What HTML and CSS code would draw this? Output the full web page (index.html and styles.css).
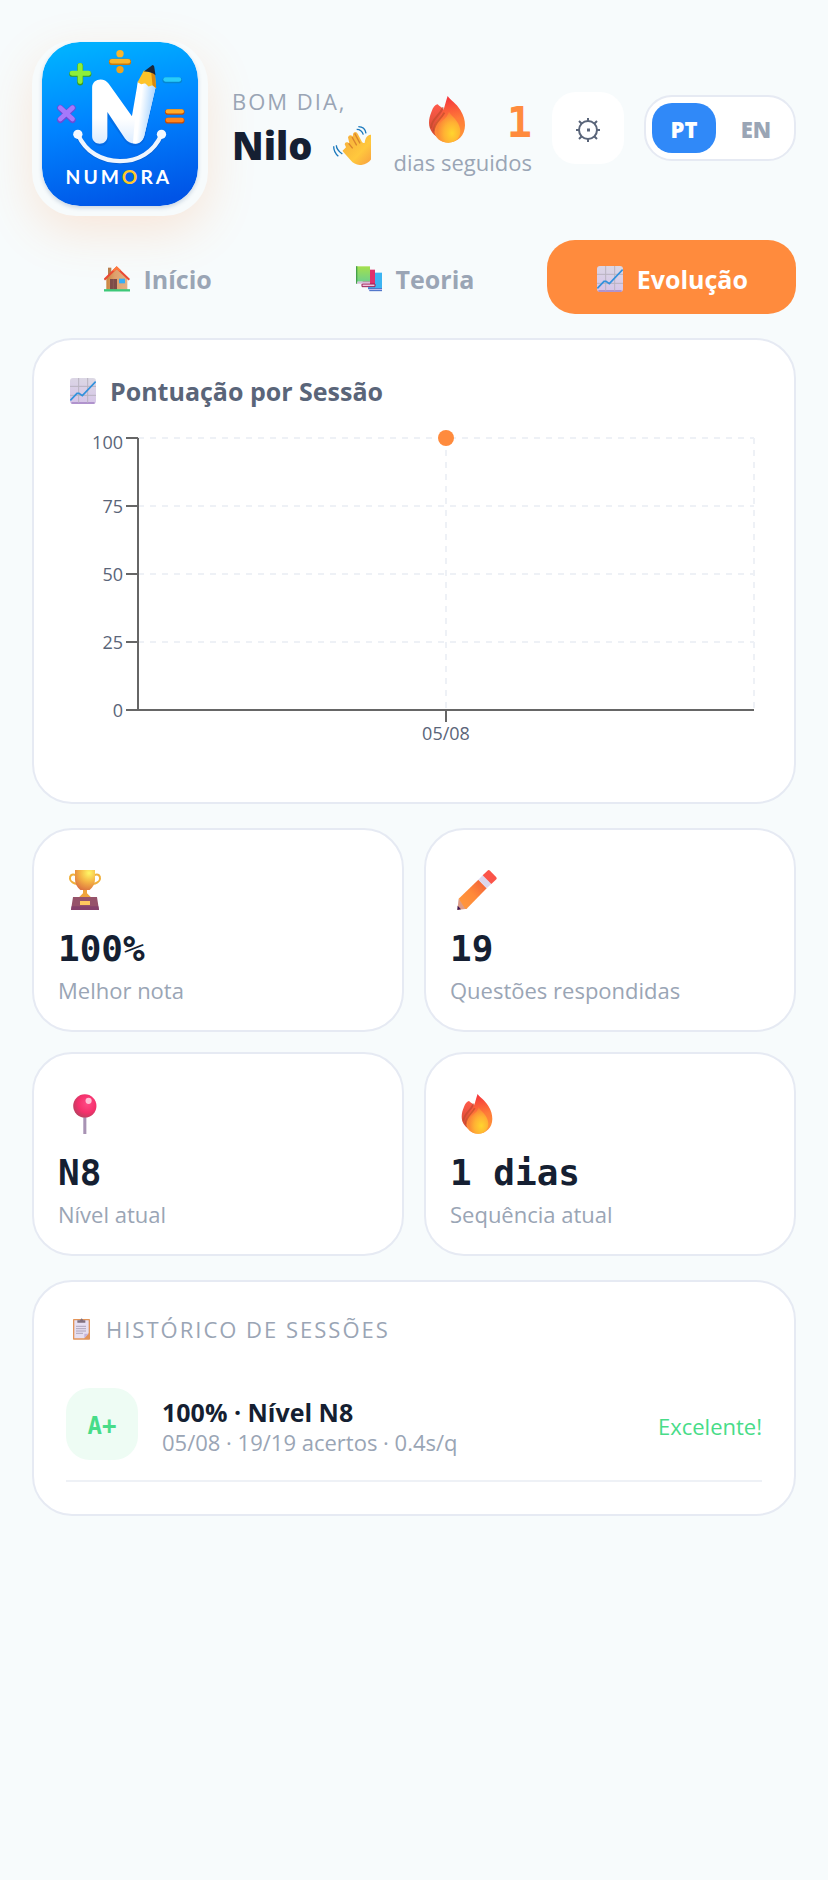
FILE: index.html
```html
<!DOCTYPE html>
<html lang="pt">
<head>
    <meta charset="UTF-8">
    <meta name="viewport" content="width=device-width, initial-scale=1.0">
    <title>Numora</title>
    <link rel="stylesheet" href="styles.css">
</head>
<body>
    <!-- shared icons -->
    <svg class="sprite" aria-hidden="true">
        <defs>
            <linearGradient id="flameOuter" x1="0.5" y1="0" x2="0.6" y2="1">
                <stop offset="0" stop-color="#f5323c"/>
                <stop offset="0.5" stop-color="#ff7a38"/>
                <stop offset="1" stop-color="#ff9b38"/>
            </linearGradient>
            <linearGradient id="flameBack" x1="0" y1="0" x2="0" y2="1">
                <stop offset="0" stop-color="#ff5a4a"/>
                <stop offset="1" stop-color="#cf4a30"/>
            </linearGradient>
            <radialGradient id="flameInner" cx="0.65" cy="0.7" r="0.7">
                <stop offset="0" stop-color="#ffd52e"/>
                <stop offset="0.5" stop-color="#ffb133"/>
                <stop offset="1" stop-color="#fa7a38"/>
            </radialGradient>
            <linearGradient id="paper" x1="1" y1="0" x2="0.8" y2="1">
                <stop offset="0" stop-color="#dcd9e4"/>
                <stop offset="1" stop-color="#d6c5e8"/>
            </linearGradient>
            <linearGradient id="wall" x1="0" y1="0" x2="1" y2="0">
                <stop offset="0" stop-color="#c9853f"/>
                <stop offset="0.4" stop-color="#dfa06c"/>
                <stop offset="1" stop-color="#e2b184"/>
            </linearGradient>
            <linearGradient id="bookGreen" x1="0" y1="0" x2="0" y2="1">
                <stop offset="0" stop-color="#a4e04c"/>
                <stop offset="1" stop-color="#6fd18a"/>
            </linearGradient>
            <radialGradient id="cup" cx="0.7" cy="0.15" r="0.9">
                <stop offset="0" stop-color="#fff766"/>
                <stop offset="0.5" stop-color="#f5b545"/>
                <stop offset="1" stop-color="#dd7440"/>
            </radialGradient>
            <linearGradient id="pencilBody" x1="0" y1="1" x2="1" y2="0">
                <stop offset="0" stop-color="#ff9a3d"/>
                <stop offset="0.5" stop-color="#ff8a3a"/>
                <stop offset="1" stop-color="#f05a38"/>
            </linearGradient>
            <radialGradient id="pinHead" cx="0.6" cy="0.4" r="0.65">
                <stop offset="0" stop-color="#ff4a85"/>
                <stop offset="0.6" stop-color="#f5306c"/>
                <stop offset="1" stop-color="#b8405f"/>
            </radialGradient>
            <linearGradient id="skin" x1="0" y1="0" x2="1" y2="1">
                <stop offset="0" stop-color="#f5a93a"/>
                <stop offset="0.6" stop-color="#ffc83d"/>
                <stop offset="1" stop-color="#f79a40"/>
            </linearGradient>
        </defs>
        <symbol id="icon-fire" viewBox="0 0 108 141">
            <path d="M8 46C12 34 18 27 25 25c3 0 4 5 11 8l10 10-10 85C14 120 0 102 0 80c0-12 3-22 8-34z" fill="url(#flameBack)"/>
            <path d="M56 0c8 12 26 22 38 42 10 16 14 30 14 46 0 30-22 52-50 52-24 0-40-14-42-34-2-24 12-36 20-50C46 42 49 20 56 0z" fill="url(#flameOuter)"/>
            <path d="M6 96C8 66 32 62 42 34M14 106c2-28 22-36 32-56" fill="none" stroke="#c24a2c" stroke-width="6" opacity=".7"/>
            <path d="M60 47c4 12 32 26 34 56 1 22-14 37-36 37-24 0-36-16-35-38C24 76 54 72 60 47z" fill="url(#flameInner)"/>
        </symbol>
        <symbol id="icon-chart" viewBox="0 0 78 78">
            <rect width="78" height="78" rx="9" fill="url(#paper)"/>
            <path d="M6 75h66" stroke="#a482c4" stroke-width="5" stroke-linecap="round"/>
            <path d="M0 25h78M0 52h78M26 0v74M53 0v74" stroke="#b9b3c0" stroke-width="3"/>
            <path d="M1 67l20-21h6l10 7 40-42" fill="none" stroke="#3191dc" stroke-width="5"/>
        </symbol>
        <symbol id="icon-house" viewBox="0 0 78 76">
            <path d="M12 4h10v26H12z" fill="#b9804f"/>
            <path d="M7 34L38 6l32 30v34H7z" fill="url(#wall)"/>
            <path d="M18 38h21v32H18z" fill="#7d4b48"/>
            <path d="M28 38v32" stroke="#94605a" stroke-width="2"/>
            <path d="M45 37h18v14H45z" fill="#35aef5"/>
            <path d="M1 40L38 4l38 36" fill="none" stroke="#ea4a34" stroke-width="6"/>
            <path d="M28 13L38 4l10 9" fill="none" stroke="#ff7a3d" stroke-width="6"/>
            <path d="M0 72h78" stroke="#3cc878" stroke-width="7"/>
        </symbol>
        <symbol id="icon-books" viewBox="0 0 78 76">
            <path d="M36 19h42v48H36z" fill="#3cb4f2"/>
            <path d="M36 66h42v8H40z" fill="#d6ccf2"/>
            <path d="M36 67h42M40 73h38" stroke="#3a68c4" stroke-width="3"/>
            <path d="M20 10h37v48H20z" fill="#e0306a"/>
            <path d="M18 53h39v8H18z" fill="#edc5dc" stroke="#9c1f55" stroke-width="3"/>
            <path d="M0 0h42v46H0z" fill="url(#bookGreen)"/>
            <path d="M2 0v52" stroke="#45a04a" stroke-width="4"/>
            <path d="M4 46h38v6H4z" fill="#d5bcd9"/>
        </symbol>
        <symbol id="icon-trophy" viewBox="0 0 96 120">
            <path d="M20 15C8 10 2 17 3 27c1 8 12 14 22 15M76 15c12-5 18 2 17 12-1 8-12 14-22 15" fill="none" stroke="#f0b03c" stroke-width="6"/>
            <path d="M18 0h60v28c0 14-6 24-16 32H34C24 52 18 42 18 28z" fill="url(#cup)"/>
            <path d="M42 60h12v10l12 12H30l12-12z" fill="#f0a53c"/>
            <path d="M12 81h72l6 39H6z" fill="#96536a"/>
            <path d="M8 109h80l2 11H6z" fill="#86426c"/>
            <path d="M33 93h30v12H33z" fill="#ffc95e"/>
        </symbol>
        <symbol id="icon-pencil" viewBox="0 0 118 120">
            <path d="M0 120l4-34 26 30z" fill="#dd9a86"/>
            <path d="M0 120l1-13 10 11z" fill="#3c1550"/>
            <path d="M4 86l59-57 25 26-60 61-4 1z" fill="url(#pencilBody)"/>
            <path d="M63 29l13-13 26 26-14 13z" fill="#dcd6ec"/>
            <path d="M76 16L92 1q3-2 6 1l19 20q2 4 0 6l-15 14z" fill="#fb5449"/>
        </symbol>
        <symbol id="icon-pin" viewBox="0 0 69 117">
            <path d="M34 64v53" stroke="#a893b4" stroke-width="9"/>
            <circle cx="34" cy="35" r="34" fill="url(#pinHead)"/>
            <circle cx="45" cy="20" r="9" fill="#ffc0d6"/>
        </symbol>
        <symbol id="icon-clipboard" viewBox="0 0 51 64">
            <rect y="2" width="51" height="62" rx="2" fill="#e2945a"/>
            <path d="M4 6h43v38L34 60H4z" fill="#e6dff2"/>
            <path d="M34 60V46h13z" fill="#c5b4dc"/>
            <path d="M9 24h30M9 31h30M9 38h30M9 45h21" stroke="#93869f" stroke-width="2"/>
            <path d="M13 13V6h8l5-6 5 6h6v7z" fill="#80707f"/>
        </symbol>
        <symbol id="icon-wave" viewBox="0 0 120 117">
            <path d="M31 72l8-8-4-9q1-8 9-6l5 3-4-18q3-9 12-5l3 3q-2-13 6-14 6 0 9 7l12 23q4 4 8 2 2-15 9-20 6-5 14-3 2 12 1 24l2 30q-4 30-36 36-20 1-32-14L31 78q-4-5 0-6z" fill="url(#skin)"/>
            <path d="M47 52l12 15M57 33l14 25M65 22l16 30" fill="none" stroke="#d9852e" stroke-width="4"/>
            <path d="M2 61q0 18 14 30M10 58q0 14 18 26M71 10q15 0 20 16M76 2q20 0 23 20" fill="none" stroke="#1c79bd" stroke-width="4"/>
        </symbol>
    </svg>

    <div class="container">
        <header class="header">
            <div class="logo">
                <svg viewBox="66 66 470 494" role="img" aria-label="Numora">
                    <defs>
                        <linearGradient id="logoBg" x1="0.4" y1="0" x2="0.6" y2="1">
                            <stop offset="0" stop-color="#00b0ff"/>
                            <stop offset="0.45" stop-color="#0084ff"/>
                            <stop offset="1" stop-color="#0054e6"/>
                        </linearGradient>
                        <linearGradient id="logoPencil" x1="0" y1="0" x2="1" y2="0.3">
                            <stop offset="0.4" stop-color="#ffffff"/>
                            <stop offset="1" stop-color="#9fd0ff"/>
                        </linearGradient>
                        <linearGradient id="logoWhite" x1="0" y1="0" x2="0" y2="1">
                            <stop offset="0.6" stop-color="#ffffff"/>
                            <stop offset="1" stop-color="#dcecff"/>
                        </linearGradient>
                    </defs>
                    <rect x="66" y="66" width="470" height="494" rx="112" fill="url(#logoBg)"/>
                    <g fill="none" stroke-linecap="round">
                        <path d="M181 138v50M157 162h49" stroke="#3a9d1e" stroke-width="18"/>
                        <path d="M181 137v48M157 160h49" stroke="#8dee3a" stroke-width="15"/>
                        <path d="M121 265l37 36M158 265l-37 36" stroke="#6a4cd6" stroke-width="19"/>
                        <path d="M121 264l37 34M158 264l-37 34" stroke="#a678fb" stroke-width="14"/>
                        <path d="M277 126h48" stroke="#c47a10" stroke-width="19"/>
                        <path d="M277 124h48" stroke="#f7b62c" stroke-width="14"/>
                        <path d="M438 181h41" stroke="#0686d0" stroke-width="18"/>
                        <path d="M438 179h41" stroke="#27ccfa" stroke-width="13"/>
                        <path d="M445 277h42M445 303h42" stroke="#c44b04" stroke-width="17"/>
                        <path d="M445 275h42" stroke="#ffac28" stroke-width="13"/>
                        <path d="M445 301h42" stroke="#ff851c" stroke-width="13"/>
                        <path d="M174 346c24 54 72 80 127 80s102-26 125-80" stroke="#0a4fb4" stroke-width="15" opacity=".5"/>
                        <path d="M174 344c24 54 72 81 127 81s102-27 125-81" stroke="#eef6ff" stroke-width="13"/>
                    </g>
                    <circle cx="301" cy="101" r="11" fill="#f7b62c"/>
                    <circle cx="301" cy="149" r="11" fill="#f0a41c"/>
                    <circle cx="174" cy="344" r="14" fill="#f4f9ff"/>
                    <circle cx="426" cy="344" r="14" fill="#f4f9ff"/>
                    <path d="M217 352V206c0-30 36-36 50-14l70 96 18-103 52 14-33 152c-8 28-44 30-60 8l-51-68v61c0 30-46 30-46 0z" fill="#0758c8" opacity=".4" transform="translate(2 5)"/>
                    <path d="M217 350V204c0-28 36-33 50-12l70 98 18-105 54 14-35 150c-8 28-42 30-58 8l-53-80v73c0 30-46 30-46 0z" fill="url(#logoWhite)"/>
                    <path d="M355 185l54 14-35 150c-6 20-20 26-34 22z" fill="url(#logoPencil)"/>
                    <path d="M354 187l19-35 33 9 4 44-11-9-12 4-10-10-12 3z" fill="#fdc32a"/>
                    <path d="M395 158l11 3 4 44-11-9z" fill="#d9890f"/>
                    <path d="M373 155l26-20q4 0 5 5l4 26q-14-12-35-11z" fill="#1c2738"/>
                    <text x="137" y="495" class="logo-name" fill="#fff">NUM<tspan fill="#ffc928">O</tspan>RA</text>
                </svg>
            </div>
            <div class="greeting">
                <p class="hello">Bom dia,</p>
                <h1>Nilo <svg class="wave"><use href="#icon-wave"/></svg></h1>
            </div>
            <div class="streak">
                <div class="streak-count"><svg class="flame"><use href="#icon-fire"/></svg><span>1</span></div>
                <p>dias seguidos</p>
            </div>
            <button class="settings" aria-label="Configurações">
                <svg viewBox="0 0 24 24" fill="none" stroke="currentColor" stroke-width="2">
                    <circle cx="12" cy="12" r="9"/>
                    <path d="M12 0v4M12 20v4M0 12h4M20 12h4M3 3l3 3M18 18l3 3M3 21l3-3M18 6l3-3"/>
                    <path d="M11 12h3" stroke-width="3"/>
                </svg>
            </button>
            <div class="lang">
                <button class="active">PT</button>
                <button>EN</button>
            </div>
        </header>

        <nav class="tabs">
            <button><svg class="emoji"><use href="#icon-house"/></svg>Início</button>
            <button><svg class="emoji"><use href="#icon-books"/></svg>Teoria</button>
            <button class="active"><svg class="emoji"><use href="#icon-chart"/></svg>Evolução</button>
        </nav>

        <section class="card">
            <h2><svg class="emoji"><use href="#icon-chart"/></svg>Pontuação por Sessão</h2>
            <svg class="chart" viewBox="0 0 696 342">
                <g class="grid-lines">
                    <path d="M72 10h616M72 78h616M72 146h616M72 214h616M380 10v272M688 10v272"/>
                </g>
                <g class="axis">
                    <path d="M72 10v272M72 282h616"/>
                    <path d="M60 10h12M60 78h12M60 146h12M60 214h12M60 282h12M380 282v12"/>
                </g>
                <g class="labels" text-anchor="end">
                    <text x="57" y="21">100</text>
                    <text x="57" y="85">75</text>
                    <text x="57" y="153">50</text>
                    <text x="57" y="221">25</text>
                    <text x="57" y="289">0</text>
                </g>
                <text class="labels" x="380" y="312" text-anchor="middle">05/08</text>
                <circle cx="380" cy="10" r="8" fill="#ff8b3d"/>
            </svg>
        </section>

        <section class="stats">
            <div class="stat">
                <svg class="stat-icon"><use href="#icon-trophy"/></svg>
                <strong>100%</strong>
                <p>Melhor nota</p>
            </div>
            <div class="stat">
                <svg class="stat-icon"><use href="#icon-pencil"/></svg>
                <strong>19</strong>
                <p>Questões respondidas</p>
            </div>
            <div class="stat">
                <svg class="stat-icon"><use href="#icon-pin"/></svg>
                <strong>N8</strong>
                <p>Nível atual</p>
            </div>
            <div class="stat">
                <svg class="stat-icon"><use href="#icon-fire"/></svg>
                <strong>1 dias</strong>
                <p>Sequência atual</p>
            </div>
        </section>

        <section class="card history">
            <h3><svg class="clipboard"><use href="#icon-clipboard"/></svg>Histórico de sessões</h3>
            <div class="session">
                <span class="grade">A+</span>
                <div class="session-info">
                    <h4>100% · Nível N8</h4>
                    <p>05/08 · 19/19 acertos · 0.4s/q</p>
                </div>
                <span class="result">Excelente!</span>
            </div>
        </section>
    </div>
</body>
</html>
```

FILE: styles.css
```css
* {
    box-sizing: border-box;
    margin: 0;
    padding: 0;
}
body {
    font-family: "Open Sans", "Noto Sans", sans-serif;
    background: #f7fbfc;
    color: #151f32;
}
button {
    font-family: inherit;
    border: none;
    background: none;
    cursor: pointer;
}
.sprite {
    position: absolute;
    width: 0;
    height: 0;
}
.container {
    padding: 40px 32px;
    display: flex;
    flex-direction: column;
    gap: 24px;
}

/* header */
.header {
    display: flex;
    align-items: center;
    gap: 20px;
}
.logo {
    flex: none;
    width: 176px;
    height: 176px;
    margin-right: 4px;
    padding: 2px 10px 10px;
    border-radius: 44px;
    background: #f7fbfc;
    box-shadow: 0 16px 48px rgba(255, 139, 61, 0.18);
}
.logo svg {
    display: block;
    width: 156px;
    height: 164px;
    border-radius: 38px;
    box-shadow: 0 2px 4px rgba(20, 60, 120, 0.2);
}
.logo-name {
    font-family: Lato, sans-serif;
    font-weight: 700;
    font-size: 58px;
    letter-spacing: 9px;
}
.greeting {
    flex: 1;
    min-width: 0;
    overflow: hidden;
    white-space: nowrap;
}
.hello {
    padding-top: 2px;
    font-size: 22px;
    line-height: 32px;
    letter-spacing: 2px;
    text-transform: uppercase;
    color: #9aa5b5;
}
.greeting h1 {
    display: flex;
    align-items: center;
    gap: 20px;
    font-size: 38px;
    font-weight: 800;
    line-height: 56px;
}
.wave {
    flex: none;
    width: 40px;
    height: 39px;
}
.streak {
    min-width: 141px;
    text-align: right;
    white-space: nowrap;
}
.streak-count {
    display: flex;
    align-items: center;
    justify-content: flex-end;
    gap: 42px;
    padding-top: 12px;
    height: 68px;
    font-family: "DejaVu Sans Mono", monospace;
    font-size: 42px;
    font-weight: 700;
    color: #ff8b3d;
}
.streak-count span {
    padding-top: 6px;
}
.flame {
    width: 36px;
    height: 47px;
}
.streak p {
    font-size: 22px;
    line-height: 30px;
    color: #9aa5b5;
}
.settings {
    flex: none;
    width: 72px;
    height: 72px;
    display: flex;
    align-items: center;
    justify-content: center;
    padding-top: 4px;
    border-radius: 24px;
    background: #fff;
    color: #5a6579;
}
.settings svg {
    width: 24px;
    height: 24px;
}
.lang {
    flex: none;
    display: flex;
    gap: 8px;
    padding: 6px;
    border: 2px solid #e6eaf3;
    border-radius: 28px;
    background: #fff;
}
.lang button {
    width: 64px;
    height: 50px;
    padding-top: 2px;
    border-radius: 20px;
    font-size: 22px;
    font-weight: 800;
    color: #9aa5b5;
}
.lang .active {
    background: #3089f8;
    color: #fff;
}

/* tabs */
.tabs {
    display: grid;
    grid-template-columns: repeat(3, 1fr);
    gap: 8px;
}
.tabs button {
    display: flex;
    align-items: center;
    justify-content: center;
    gap: 14px;
    height: 74px;
    padding: 4px 0 0 2px;
    border-radius: 28px;
    font-size: 25px;
    font-weight: 700;
    color: #9aa5b5;
}
.tabs .active {
    background: #ff8b3d;
    color: #fff;
}
.emoji {
    flex: none;
    width: 26px;
    height: 26px;
}

/* cards */
.card {
    padding: 32px;
    border: 2px solid #e6eaf3;
    border-radius: 40px;
    background: #fff;
}
.card h2 {
    display: flex;
    align-items: center;
    gap: 14px;
    margin: 0 4px 18px;
    font-size: 25px;
    line-height: 38px;
    font-weight: 700;
    color: #5a6579;
}
.chart {
    display: block;
    width: 100%;
    height: auto;
}
.grid-lines path {
    fill: none;
    stroke: #eef1f6;
    stroke-width: 2;
    stroke-dasharray: 6 6;
}
.axis path {
    fill: none;
    stroke: #666;
    stroke-width: 2;
}
.labels {
    font-size: 18px;
    fill: #5a6579;
}

/* stats */
.stats {
    display: grid;
    grid-template-columns: 1fr 1fr;
    gap: 20px;
}
.stat {
    height: 204px;
    padding: 40px 24px 24px;
    border: 2px solid #e6eaf3;
    border-radius: 40px;
    background: #fff;
}
.stat-icon {
    display: block;
    width: 40px;
    height: 40px;
    margin: 0 0 16px 7px;
}
.stat strong {
    display: block;
    font-family: "DejaVu Sans Mono", monospace;
    font-size: 36px;
    line-height: 46px;
}
.stat p {
    font-size: 22px;
    line-height: 36px;
    color: #9aa5b5;
}

/* history */
.history h3 {
    display: flex;
    align-items: center;
    gap: 16px;
    margin: 0 7px 24px;
    font-size: 22px;
    line-height: 30px;
    font-weight: 400;
    letter-spacing: 2px;
    text-transform: uppercase;
    color: #9aa5b5;
}
.clipboard {
    width: 17px;
    height: 22px;
}
.session {
    display: flex;
    align-items: center;
    gap: 24px;
    padding: 20px 0;
    border-bottom: 2px solid #eef1f6;
}
.grade {
    width: 72px;
    height: 72px;
    border-radius: 24px;
    background: #eefcf4;
    font-family: "DejaVu Sans Mono", monospace;
    font-size: 24px;
    font-weight: 700;
    line-height: 76px;
    text-align: center;
    color: #48dc88;
}
.session-info {
    flex: 1;
    padding-top: 6px;
}
.session-info h4 {
    font-size: 25px;
    line-height: 30px;
}
.session-info p {
    font-size: 22px;
    line-height: 30px;
    color: #9aa5b5;
}
.result {
    padding-top: 4px;
    font-size: 22px;
    color: #48dc88;
}
```
